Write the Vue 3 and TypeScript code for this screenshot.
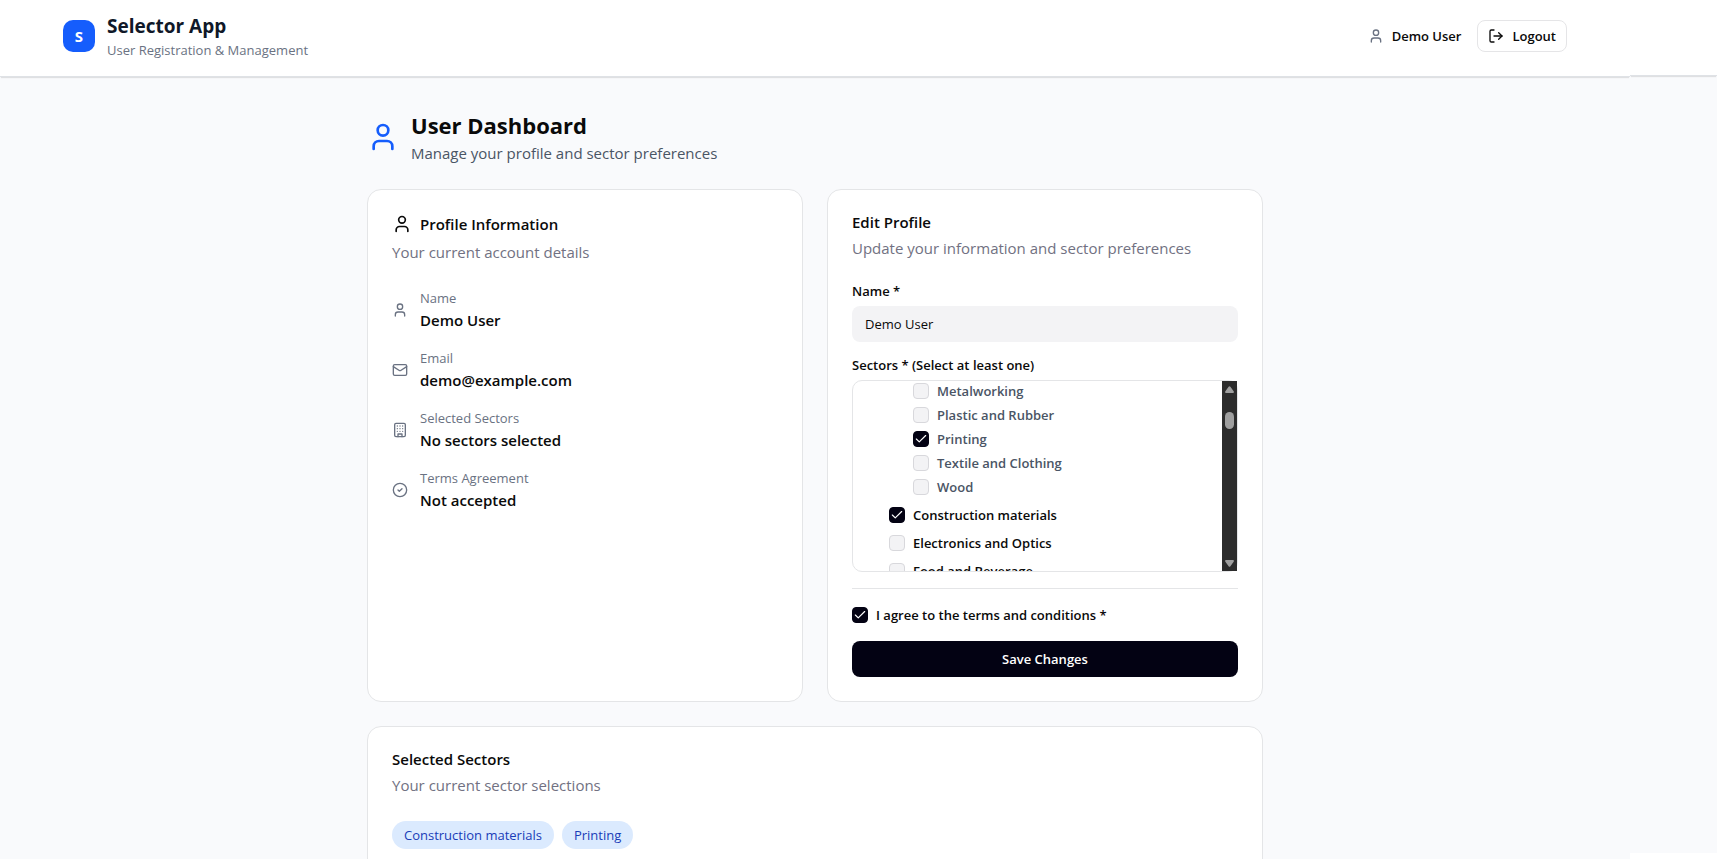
<script setup lang="ts">
import { computed, reactive, ref } from 'vue'

interface Sector {
  id: string
  label: string
  child: boolean
  checked: boolean
}

interface Detail {
  icon: 'user' | 'mail' | 'building' | 'check'
  label: string
  value: string
}

const name = ref('Demo User')
const agreed = ref(true)

const sectors = reactive<Sector[]>([
  { id: 'metalworking', label: 'Metalworking', child: true, checked: false },
  { id: 'plastic', label: 'Plastic and Rubber', child: true, checked: false },
  { id: 'printing', label: 'Printing', child: true, checked: true },
  { id: 'textile', label: 'Textile and Clothing', child: true, checked: false },
  { id: 'wood', label: 'Wood', child: true, checked: false },
  { id: 'construction', label: 'Construction materials', child: false, checked: true },
  { id: 'electronics', label: 'Electronics and Optics', child: false, checked: false },
  { id: 'food', label: 'Food and Beverage', child: false, checked: false },
])

const details: Detail[] = [
  { icon: 'user', label: 'Name', value: 'Demo User' },
  { icon: 'mail', label: 'Email', value: 'demo@example.com' },
  { icon: 'building', label: 'Selected Sectors', value: 'No sectors selected' },
  { icon: 'check', label: 'Terms Agreement', value: 'Not accepted' },
]

const selected = computed(() =>
  sectors
    .filter((s) => s.checked)
    .map((s) => s.label)
    .sort(),
)
</script>

<template>
  <div class="page">
    <div class="content">
      <header class="topbar">
        <div class="topbar-inner">
          <div class="brand">
            <div class="logo">S</div>
            <div>
              <div class="brand-name">Selector App</div>
              <div class="brand-sub">User Registration &amp; Management</div>
            </div>
          </div>
          <div class="account">
            <div class="account-user">
              <svg class="icon16 muted" viewBox="0 0 24 24"><path d="M19 21v-2a4 4 0 0 0-4-4H9a4 4 0 0 0-4 4v2" /><circle cx="12" cy="7" r="4" /></svg>
              <span>Demo User</span>
            </div>
            <button type="button" class="logout">
              <svg class="icon16" viewBox="0 0 24 24"><path d="m16 17 5-5-5-5" /><path d="M21 12H9" /><path d="M9 21H5a2 2 0 0 1-2-2V5a2 2 0 0 1 2-2h4" /></svg>
              Logout
            </button>
          </div>
        </div>
      </header>

      <main class="main">
        <div class="heading">
          <svg class="icon32" viewBox="0 0 24 24"><path d="M19 21v-2a4 4 0 0 0-4-4H9a4 4 0 0 0-4 4v2" /><circle cx="12" cy="7" r="4" /></svg>
          <div>
            <h1>User Dashboard</h1>
            <p class="heading-sub">Manage your profile and sector preferences</p>
          </div>
        </div>

        <div class="columns">
          <section class="card">
            <div class="card-head">
              <h2 class="with-icon">
                <svg class="icon20" viewBox="0 0 24 24"><path d="M19 21v-2a4 4 0 0 0-4-4H9a4 4 0 0 0-4 4v2" /><circle cx="12" cy="7" r="4" /></svg>
                Profile Information
              </h2>
              <p>Your current account details</p>
            </div>
            <div class="details">
              <div v-for="d in details" :key="d.label" class="detail">
                <svg class="icon16 muted" viewBox="0 0 24 24">
                  <template v-if="d.icon === 'user'"><path d="M19 21v-2a4 4 0 0 0-4-4H9a4 4 0 0 0-4 4v2" /><circle cx="12" cy="7" r="4" /></template>
                  <template v-else-if="d.icon === 'mail'"><rect width="20" height="16" x="2" y="4" rx="2" /><path d="m22 7-8.97 5.7a1.94 1.94 0 0 1-2.06 0L2 7" /></template>
                  <template v-else-if="d.icon === 'building'"><rect width="16" height="20" x="4" y="2" rx="2" /><path d="M9 22v-4h6v4M8 6h.01M16 6h.01M12 6h.01M12 10h.01M12 14h.01M16 10h.01M16 14h.01M8 10h.01M8 14h.01" /></template>
                  <template v-else><circle cx="12" cy="12" r="10" /><path d="m9 12 2 2 4-4" /></template>
                </svg>
                <div>
                  <div class="detail-label">{{ d.label }}</div>
                  <div class="detail-value">{{ d.value }}</div>
                </div>
              </div>
            </div>
          </section>

          <section class="card">
            <div class="card-head">
              <h2>Edit Profile</h2>
              <p>Update your information and sector preferences</p>
            </div>
            <form class="form" @submit.prevent>
              <div class="field">
                <label class="field-label" for="name">Name *</label>
                <input id="name" v-model="name" class="text-input" type="text" />
              </div>
              <div class="field">
                <div id="sectors-label" class="field-label">Sectors * (Select at least one)</div>
                <div class="sector-box" role="group" aria-labelledby="sectors-label">
                  <div class="sector-list">
                    <div v-for="s in sectors" :key="s.id" class="sector" :class="{ child: s.child }">
                      <span class="check">
                        <input :id="s.id" v-model="s.checked" type="checkbox" />
                        <svg v-if="s.checked" viewBox="0 0 24 24"><path d="M20 6 9 17l-5-5" /></svg>
                      </span>
                      <label :for="s.id">{{ s.label }}</label>
                    </div>
                  </div>
                  <div class="scrollbar" aria-hidden="true">
                    <svg viewBox="0 0 9 7"><path d="M3.6.8a1.1 1.1 0 0 1 1.8 0L8.8 5.6Q9.2 7 8 7H1Q-.2 7 .2 5.6Z" /></svg>
                    <div class="thumb"></div>
                    <svg class="down" viewBox="0 0 9 7"><path d="M3.6 6.2a1.1 1.1 0 0 0 1.8 0L8.8 1.4Q9.2 0 8 0H1Q-.2 0 .2 1.4Z" /></svg>
                  </div>
                </div>
              </div>
              <div class="terms">
                <span class="check">
                  <input id="terms" v-model="agreed" type="checkbox" />
                  <svg v-if="agreed" viewBox="0 0 24 24"><path d="M20 6 9 17l-5-5" /></svg>
                </span>
                <label for="terms">I agree to the terms and conditions *</label>
              </div>
              <button type="submit" class="save">Save Changes</button>
            </form>
          </section>
        </div>

        <section class="card">
          <div class="card-head">
            <h2>Selected Sectors</h2>
            <p>Your current sector selections</p>
          </div>
          <div class="pills">
            <span v-for="s in selected" :key="s" class="pill">{{ s }}</span>
          </div>
        </section>
      </main>
    </div>

    <div class="gutter">
      <div class="gutter-top"></div>
      <div class="gutter-bottom"></div>
    </div>
  </div>
</template>

<style>
body {
  margin: 0;
  background: #f9fafc;
}
</style>

<style scoped>
* {
  box-sizing: border-box;
}
.page {
  display: flex;
  height: 100vh;
  overflow: hidden;
  background: #f9fafc;
  color: #0a0a0a;
  font-family: 'Open Sans', 'Noto Sans', sans-serif;
  font-size: 13px;
  line-height: 20px;
}
.content {
  flex: 1;
  min-width: 0;
}
.gutter {
  display: flex;
  flex-direction: column;
  justify-content: space-between;
  flex: 0 0 87px;
}
.gutter-top {
  height: 76px;
  background: #fff;
}
.gutter-bottom {
  height: 6px;
  background: #fff;
}
.topbar,
.gutter-top {
  border-bottom: 1px solid #dfe2e6;
  box-shadow: 0 2px 1px -1px rgba(0, 0, 0, 0.1);
}
h1,
h2,
p {
  margin: 0;
}
svg {
  display: block;
  flex: none;
  fill: none;
  stroke: currentColor;
  stroke-width: 2;
  stroke-linecap: round;
  stroke-linejoin: round;
}
.icon16 {
  width: 16px;
  height: 16px;
}
.icon20 {
  width: 20px;
  height: 20px;
}
.icon32 {
  width: 32px;
  height: 32px;
  color: #155dfc;
}
.muted {
  color: #6a7282;
}
.topbar {
  background: #fff;
}
.topbar-inner {
  display: flex;
  align-items: center;
  justify-content: space-between;
  max-width: 1536px;
  margin: 0 auto;
  padding: 12px 16px 16px;
}
.brand {
  display: flex;
  align-items: center;
  gap: 12px;
}
.logo {
  display: grid;
  place-items: center;
  width: 32px;
  height: 32px;
  border-radius: 10px;
  background: #155dfc;
  color: #fff;
  font-size: 15px;
  font-weight: 700;
}
.brand-name {
  color: #101828;
  font-size: 19px;
  font-weight: 700;
  line-height: 29px;
}
.brand-sub {
  color: #6a7282;
  line-height: 19px;
}
.account,
.account-user {
  display: flex;
  align-items: center;
  font-weight: 600;
}
.account {
  gap: 16px;
}
.account-user {
  gap: 8px;
}
.logout {
  display: flex;
  align-items: center;
  gap: 8px;
  height: 32px;
  padding: 0 10px;
  border: 1px solid #e5e5e7;
  border-radius: 8px;
  background: #fff;
  color: #0a0a0a;
  font: inherit;
  cursor: pointer;
}
.main {
  display: flex;
  flex-direction: column;
  gap: 24px;
  max-width: 896px;
  margin: 0 auto;
  padding: 32px 0;
}
.heading {
  display: flex;
  align-items: center;
  gap: 12px;
}
h1 {
  font-size: 22px;
  font-weight: 700;
  line-height: 33px;
}
.heading-sub {
  color: #4a5565;
  font-size: 15px;
  line-height: 23px;
}
.columns {
  display: grid;
  grid-template-columns: 1fr 1fr;
  gap: 24px;
}
.card {
  display: flex;
  flex-direction: column;
  gap: 24px;
  padding: 24px;
  border: 1px solid #e4e5e7;
  border-radius: 14px;
  background: #fff;
}
.card-head {
  display: flex;
  flex-direction: column;
  gap: 6px;
}
.card-head p {
  color: #717182;
  font-size: 15px;
  line-height: 24px;
}
h2 {
  font-size: 15px;
  font-weight: 600;
  line-height: 16px;
}
.with-icon {
  display: flex;
  align-items: center;
  gap: 8px;
}
.details {
  display: flex;
  flex-direction: column;
  gap: 16px;
}
.detail {
  display: flex;
  align-items: center;
  gap: 12px;
}
.detail-label {
  color: #6a7282;
}
.detail-value {
  font-size: 15px;
  font-weight: 600;
  line-height: 24px;
}
.form {
  display: flex;
  flex-direction: column;
  gap: 16px;
}
.field {
  display: flex;
  flex-direction: column;
  gap: 8px;
}
.field-label {
  font-weight: 600;
  line-height: 14px;
}
.text-input {
  width: 100%;
  height: 36px;
  padding: 0 13px;
  border: 0;
  border-radius: 8px;
  background: #f3f3f5;
  color: #0a0a0a;
  font: inherit;
}
.sector-box {
  display: flex;
  height: 192px;
  border: 1px solid #e4e5e7;
  border-radius: 10px;
}
.sector-list {
  flex: 1;
  padding: 2px 12px 12px 36px;
  overflow-y: auto;
  scrollbar-width: none;
}
.sector,
.terms {
  display: flex;
  align-items: center;
  gap: 8px;
  font-weight: 600;
}
.sector {
  height: 16px;
  margin-bottom: 12px;
}
.sector.child {
  margin-left: 24px;
  color: #4a5565;
}
.sector.child:has(+ .child) {
  margin-bottom: 8px;
}
.check {
  display: grid;
  place-items: center;
}
.check > * {
  grid-area: 1 / 1;
}
.check input {
  appearance: none;
  width: 16px;
  height: 16px;
  margin: 0;
  border: 1px solid #d8d8dc;
  border-radius: 4px;
  background: #f3f3f5;
}
.check input:checked {
  border-color: #030213;
  background: #030213;
}
.check svg {
  width: 14px;
  height: 14px;
  color: #fff;
  pointer-events: none;
}
.scrollbar {
  display: flex;
  flex-direction: column;
  align-items: center;
  width: 15px;
  padding: 5px 0 4px;
  background: #2c2c2c;
}
.scrollbar svg {
  width: 9px;
  height: 7px;
  fill: #9f9f9f;
  stroke: none;
}
.thumb {
  width: 9px;
  height: 17px;
  margin-top: 19px;
  border-radius: 5px;
  background: #9f9f9f;
}
.scrollbar .down {
  margin-top: auto;
}
.terms {
  padding-top: 16px;
  border-top: 1px solid #e4e5e7;
}
.save {
  height: 36px;
  border: 0;
  border-radius: 8px;
  background: #030213;
  color: #fff;
  font: inherit;
  font-weight: 600;
  cursor: pointer;
}
.pills {
  display: flex;
  flex-wrap: wrap;
  gap: 8px;
}
.pill {
  padding: 4px 12px;
  border-radius: 14px;
  background: #dbeafe;
  color: #193cb8;
}
</style>
